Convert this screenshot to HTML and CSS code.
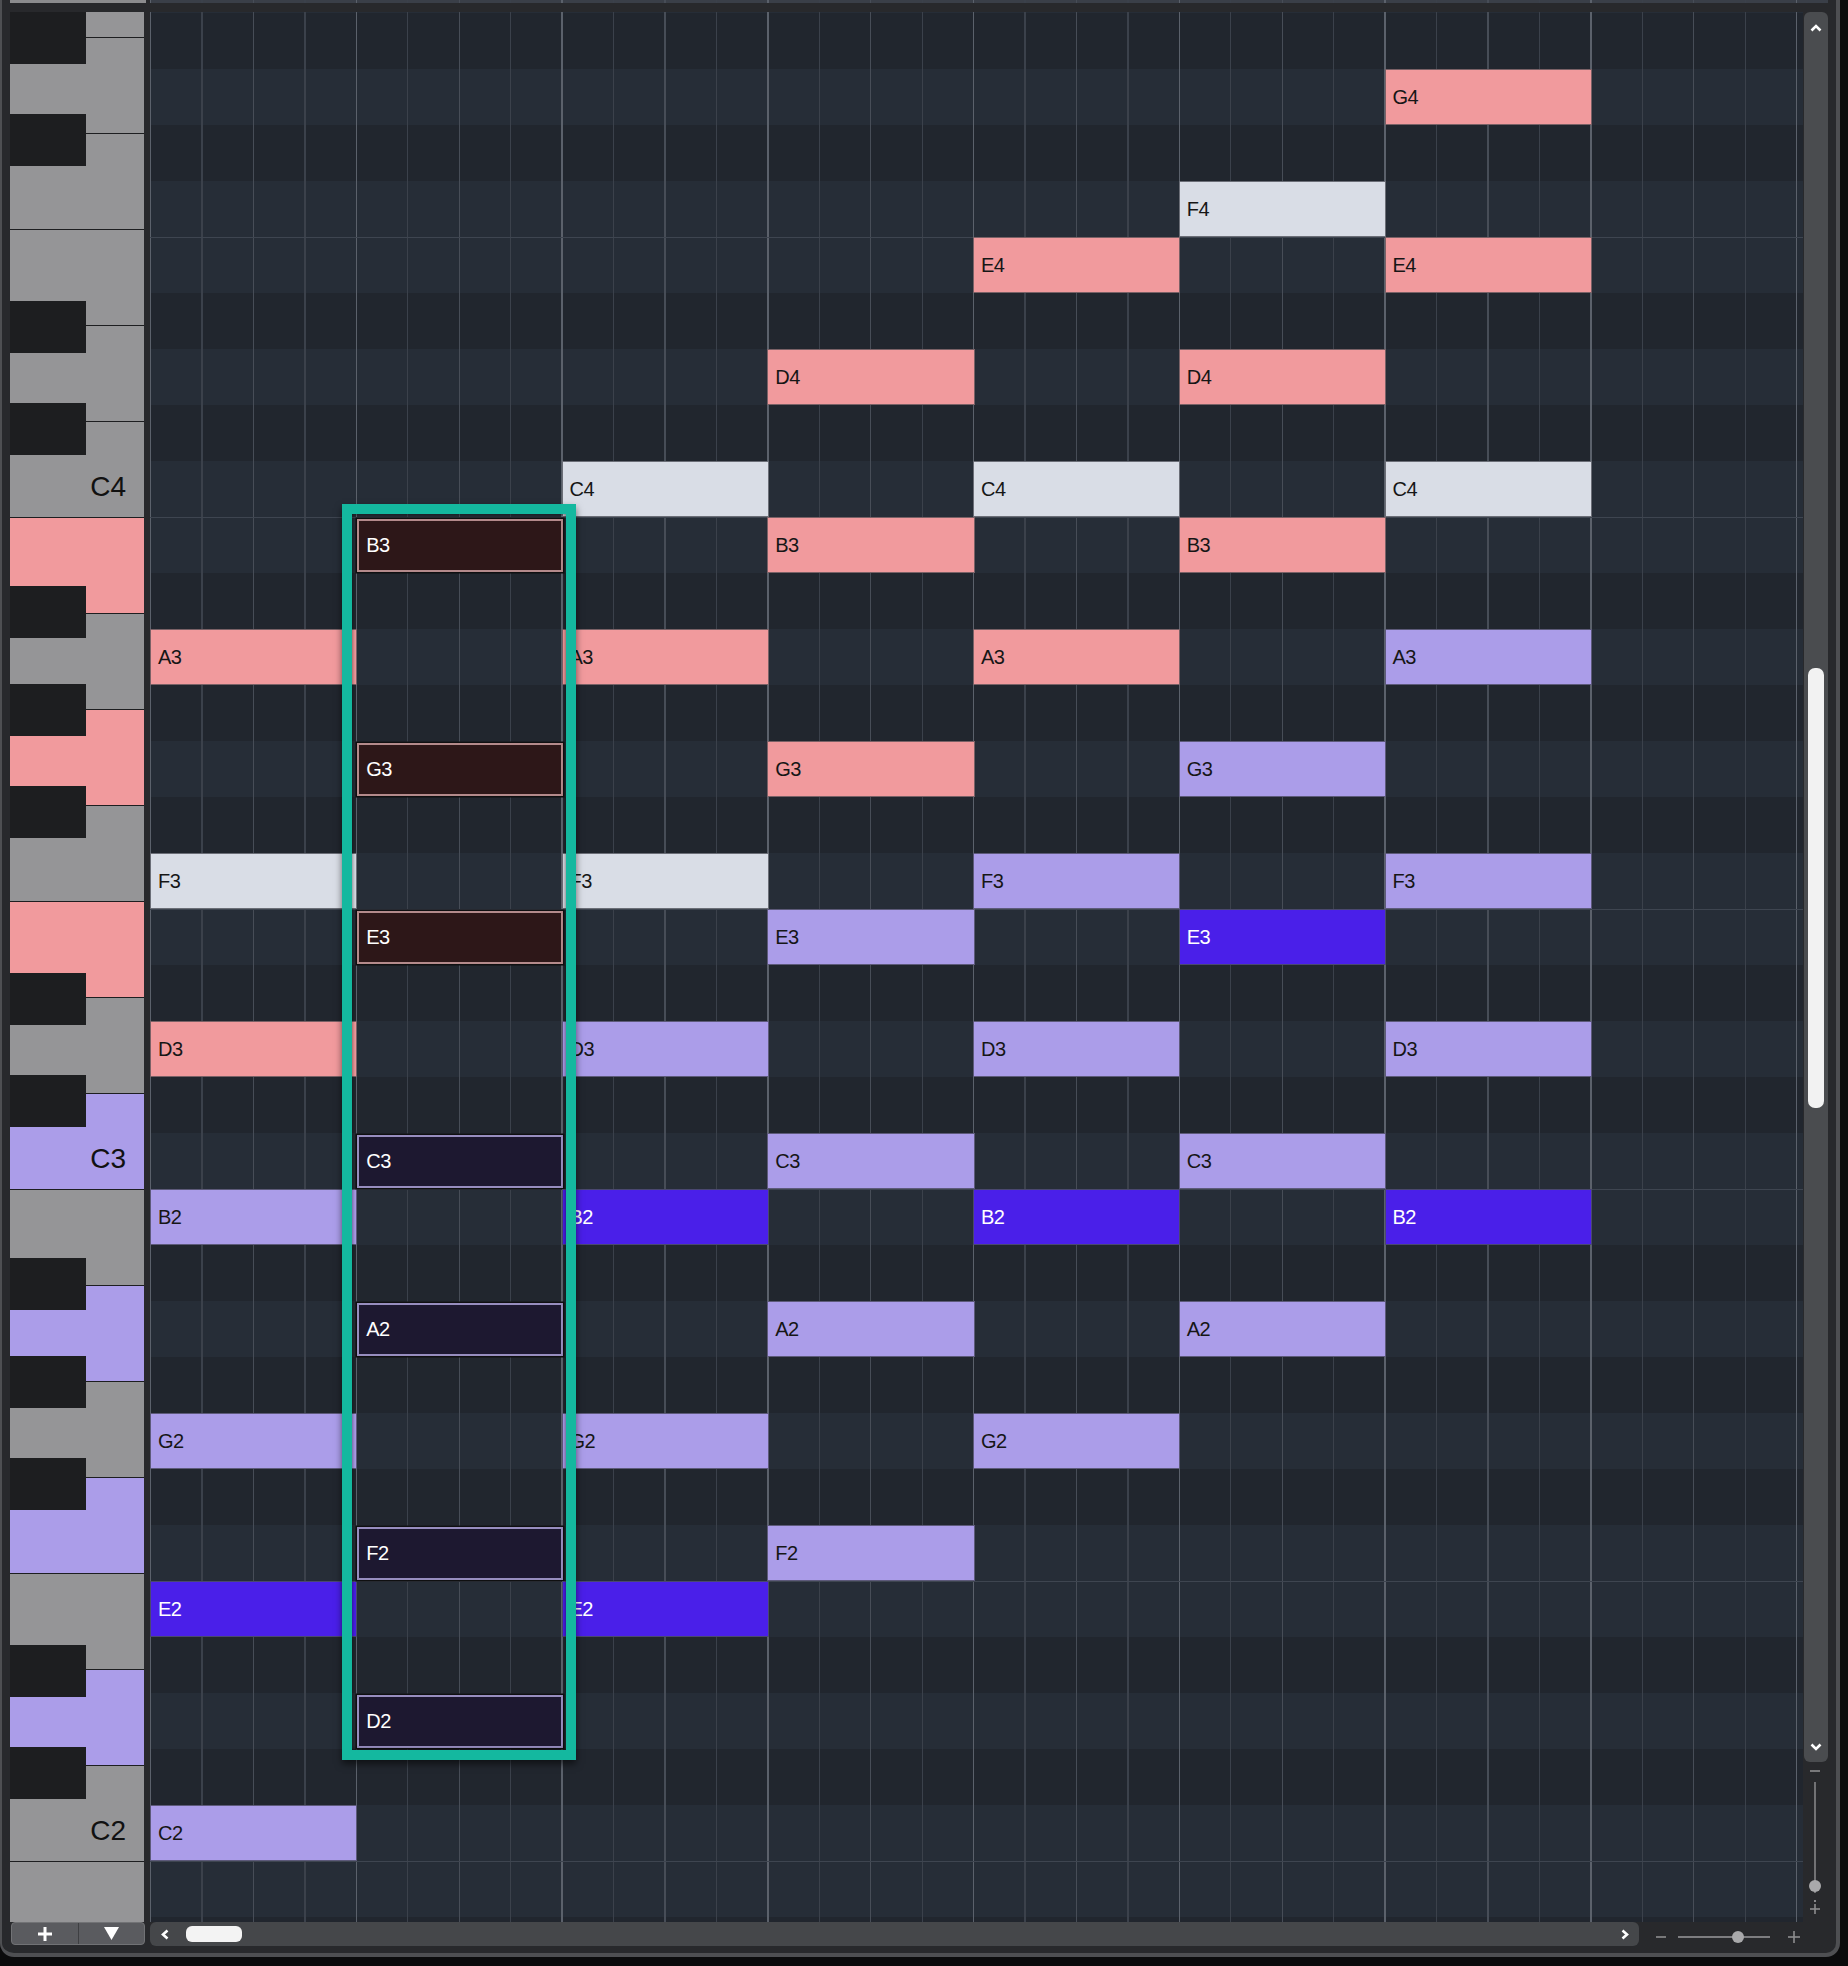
FILE: index.html
```html
<!DOCTYPE html>
<html lang="en">
<head>
    <meta charset="UTF-8">
    <meta name="viewport" content="width=device-width, initial-scale=1.0">
    <title>Key Editor</title>
    <link rel="stylesheet" href="styles.css">
</head>
<body>
    <div class="window">
        <!-- bottom edge of the ruler above -->
        <div class="top-strip">
            <div class="top-keys"></div>
            <div class="top-grid"></div>
        </div>

        <div class="main">
            <div class="keyboard">
                <div class="keys" id="keys"></div>
            </div>

            <div class="grid-wrap">
                <div class="grid" id="grid">
                    <div class="selection" id="selection"></div>
                </div>
            </div>

            <div class="vside">
                <div class="vscroll">
                    <svg class="chev-v" width="12" height="9" viewBox="0 0 12 9"><polyline points="1.5,7.5 6,3 10.5,7.5" /></svg>
                    <div class="vthumb"></div>
                    <svg class="chev-v chev-down" width="12" height="9" viewBox="0 0 12 9"><polyline points="1.5,1.5 6,6 10.5,1.5" /></svg>
                </div>
                <svg class="vzoom" width="24" height="160" viewBox="0 0 24 160">
                    <line x1="6" y1="9" x2="16" y2="9" class="zl" />
                    <line x1="11" y1="20" x2="11" y2="131" class="zt" />
                    <circle cx="11" cy="124" r="6" class="zk" />
                    <circle cx="11" cy="139" r="1" class="zk" />
                    <line x1="6" y1="147" x2="16" y2="147" class="zl" />
                    <line x1="11" y1="142" x2="11" y2="152" class="zl" />
                </svg>
            </div>
        </div>

        <div class="bottom">
            <div class="btn-group">
                <div class="btn">
                    <svg width="16" height="14" viewBox="0 0 16 14"><path d="M8 0V14M1 7H15" class="icon-stroke" /></svg>
                </div>
                <div class="btn">
                    <svg width="15" height="13" viewBox="0 0 15 13"><polygon points="0,0 15,0 7.5,13" fill="#fff" /></svg>
                </div>
            </div>
            <div class="hscroll">
                <svg class="chev-h" width="8" height="11" viewBox="0 0 8 11"><polyline points="6.5,1.5 2,5.5 6.5,9.5" /></svg>
                <div class="hthumb"></div>
                <svg class="chev-h chev-right" width="8" height="11" viewBox="0 0 8 11"><polyline points="1.5,1.5 6,5.5 1.5,9.5" /></svg>
            </div>
            <svg class="hzoom" width="156" height="24" viewBox="0 0 156 24">
                <line x1="6" y1="15" x2="16" y2="15" class="zl" />
                <line x1="28" y1="15" x2="120" y2="15" class="zt" />
                <circle cx="88" cy="15" r="6" class="zk" />
                <line x1="138" y1="15" x2="150" y2="15" class="zl" />
                <line x1="144" y1="9" x2="144" y2="21" class="zl" />
            </svg>
        </div>
    </div>

    <script>
        const names = ['B', 'A#', 'A', 'G#', 'G', 'F#', 'F', 'E', 'D#', 'D', 'C#', 'C'];

        // keys lit up on the keyboard
        const keyColors = {
            B3: 'pink', G3: 'pink', E3: 'pink',
            C3: 'lav', A2: 'lav', F2: 'lav', D2: 'lav'
        };

        // one list of [note, colour] per bar
        const bars = [
            [['A3', 'pink'], ['F3', 'light'], ['D3', 'pink'], ['B2', 'lav'], ['G2', 'lav'], ['E2', 'blue'], ['C2', 'lav']],
            [['B3', 'dred'], ['G3', 'dred'], ['E3', 'dred'], ['C3', 'dlav'], ['A2', 'dlav'], ['F2', 'dlav'], ['D2', 'dlav']],
            [['C4', 'light'], ['A3', 'pink'], ['F3', 'light'], ['D3', 'lav'], ['B2', 'blue'], ['G2', 'lav'], ['E2', 'blue']],
            [['D4', 'pink'], ['B3', 'pink'], ['G3', 'pink'], ['E3', 'lav'], ['C3', 'lav'], ['A2', 'lav'], ['F2', 'lav']],
            [['E4', 'pink'], ['C4', 'light'], ['A3', 'pink'], ['F3', 'lav'], ['D3', 'lav'], ['B2', 'blue'], ['G2', 'lav']],
            [['F4', 'light'], ['D4', 'pink'], ['B3', 'pink'], ['G3', 'lav'], ['E3', 'blue'], ['C3', 'lav'], ['A2', 'lav']],
            [['G4', 'pink'], ['E4', 'pink'], ['C4', 'light'], ['A3', 'lav'], ['F3', 'lav'], ['D3', 'lav'], ['B2', 'blue']]
        ];

        function rowOf(note) {
            const name = note.slice(0, -1);
            const octave = parseInt(note.slice(-1));
            return (4 - octave) * 12 + names.indexOf(name);
        }

        // Keyboard: octaves 4..2, then just the top of octave 1
        const keys = document.getElementById('keys');
        for (let oct = 4; oct >= 1; oct--) {
            const octave = document.createElement('div');
            octave.className = 'octave';
            const whites = oct > 1 ? ['B', 'A', 'G', 'F', 'E', 'D', 'C'] : ['B', 'A'];
            const blacks = oct > 1 ? ['as', 'gs', 'fs', 'ds', 'cs'] : ['as'];
            whites.forEach(function(n) {
                const key = document.createElement('div');
                key.className = 'white ' + (keyColors[n + oct] || '');
                if (n === 'C') key.textContent = 'C' + oct;
                octave.appendChild(key);
            });
            blacks.forEach(function(n) {
                const key = document.createElement('div');
                key.className = 'black bk-' + n;
                octave.appendChild(key);
            });
            keys.appendChild(octave);
        }

        // Grid rows
        const grid = document.getElementById('grid');
        const selection = document.getElementById('selection');
        for (let r = 0; r < 40; r++) {
            const name = names[r % 12];
            const row = document.createElement('div');
            row.className = 'row';
            if (name.includes('#')) row.className += ' sharp';
            if (name === 'B' || name === 'E') row.className += ' edge';
            row.style.gridRow = r + 1;
            grid.insertBefore(row, selection);
        }

        // Notes
        bars.forEach(function(notes, bar) {
            notes.forEach(function(item) {
                const note = document.createElement('div');
                note.className = 'note ' + item[1];
                note.textContent = item[0];
                note.style.gridRow = rowOf(item[0]) + 1;
                note.style.gridColumn = bar + 1;
                grid.insertBefore(note, selection);
            });
        });
    </script>
</body>
</html>
```

FILE: styles.css
```css
* {
    box-sizing: border-box;
}
body {
    margin: 0;
    width: 1848px;
    height: 1966px;
    overflow: hidden;
    background-color: #0b0b0c;
    font-family: "Liberation Sans", Arial, sans-serif;
    --lines: repeating-linear-gradient(90deg, #5b616b 0 1.3px, transparent 1.3px 205.75px),
             repeating-linear-gradient(90deg, #474d57 0 1.3px, transparent 1.3px 102.875px),
             repeating-linear-gradient(90deg, #3b414b 0 1.3px, transparent 1.3px 51.4375px);
}
.window {
    width: 1840px;
    height: 1957px;
    background-color: #28292c;
    border: 0 solid #4e4f52;
    border-width: 0 4px 4px 2px;
    border-radius: 0 0 14px 14px;
    display: flex;
    flex-direction: column;
}

/* top strip */
.top-strip {
    display: flex;
    height: 3px;
    margin-bottom: 9px;
}
.top-keys {
    width: 136px;
    margin-left: 8px;
    background-color: #8c8c8e;
}
.top-grid {
    width: 1678px;
    margin-left: 4px;
    background-color: #3a3f48;
    background-image: var(--lines);
}

.main {
    display: flex;
    height: 1910px;
}

/* keyboard */
.keyboard {
    width: 134px;
    margin-left: 8px;
    overflow: hidden;
    background-color: #959597;
}
.keys {
    margin-top: -167px;
}
.octave {
    position: relative;
    height: 672px;
}
.white {
    height: 96px;
    background-color: #959597;
    border-top: 1.5px solid #1d1e20;
    display: flex;
    align-items: flex-end;
    justify-content: flex-end;
    padding: 0 18px 16px 0;
    font-size: 28px;
    line-height: 28px;
    color: #111;
}
.white.pink {
    background-color: #f19a9d;
}
.white.lav {
    background-color: #ab9de9;
}
.black {
    position: absolute;
    left: 0;
    width: 76px;
    height: 52px;
    background-color: #1d1e20;
}
.bk-as { top: 69px; }
.bk-gs { top: 167px; }
.bk-fs { top: 269px; }
.bk-ds { top: 456px; }
.bk-cs { top: 558px; }

/* note grid */
.grid-wrap {
    width: 1653px;
    margin-left: 6px;
    overflow: hidden;
}
.grid {
    display: grid;
    grid-template-columns: repeat(8, 205.75px) 1fr;
    grid-template-rows: repeat(40, 56px);
    margin-top: -167px;
}
.row {
    grid-column: 1 / -1;
    background-color: #262d37;
    background-image: var(--lines);
}
.row.sharp {
    background-color: #21262e;
}
.row.edge {
    background-image: linear-gradient(#3e4550 0 1.3px, transparent 1.3px), var(--lines);
}
.note {
    margin-right: -1.5px;
    border: 1.5px solid #6b6e77;
    display: flex;
    align-items: center;
    padding-left: 7px;
    font-size: 20px;
    letter-spacing: -0.5px;
    color: #161616;
    z-index: 1;
}
.note.pink {
    background-color: #f19a9d;
    border-color: #7a6166;
}
.note.lav {
    background-color: #ab9de9;
    border-color: #5d5a7a;
}
.note.light {
    background-color: #d9dde6;
    border-color: #6b6e77;
}
.note.blue {
    background-color: #4a1fe9;
    border-color: #4a4870;
    color: #fff;
}
.note.dred,
.note.dlav {
    margin: 2px -1.5px 1.5px 1.5px;
    border-width: 2px;
    box-shadow: 0 0 0 1.5px #0f0f10;
    color: #fff;
}
.note.dred {
    background-color: #2d1718;
    border-color: #b48a8b;
}
.note.dlav {
    background-color: #1d1830;
    border-color: #978dbf;
}
.selection {
    grid-row: 13 / 35;
    grid-column: 2 / 3;
    margin: -13px -14px -11px -14px;
    border: 10px solid #14b89f;
    box-shadow: 0 4px 7px rgba(0, 0, 0, 0.55), inset 0 0 4px rgba(0, 0, 0, 0.6);
    z-index: 2;
}

/* vertical scroller + zoom */
.vside {
    width: 24px;
    margin-left: 1px;
    display: flex;
    flex-direction: column;
}
.vscroll {
    height: 1750px;
    background-color: #4a4c4f;
    border-radius: 6px;
    display: flex;
    flex-direction: column;
    align-items: center;
}
.chev-v,
.chev-h {
    fill: none;
    stroke: #fff;
    stroke-width: 2.6;
}
.chev-v {
    margin-top: 11px;
}
.chev-down {
    margin-top: auto;
    margin-bottom: 10px;
}
.vthumb {
    width: 16px;
    height: 440px;
    margin-top: 636px;
    background-color: #f2f2f2;
    border-radius: 7px;
}
.zl {
    stroke: #8d8d8f;
    stroke-width: 1.6;
}
.zt {
    stroke: #9a9a9c;
    stroke-width: 1.3;
}
.zk {
    fill: #a9a9ab;
}

/* bottom bar */
.bottom {
    display: flex;
    height: 24px;
}
.btn-group {
    width: 134px;
    height: 23px;
    margin-left: 9px;
    display: flex;
    background-color: #5a5b5f;
    border: 1px solid #717275;
    border-radius: 4px;
}
.btn {
    flex: 1;
    display: flex;
    align-items: center;
    justify-content: center;
}
.btn + .btn {
    border-left: 1px solid #3e3f42;
}
.icon-stroke {
    stroke: #fff;
    stroke-width: 3;
}
.hscroll {
    width: 1489px;
    margin-left: 5px;
    background-color: #45474a;
    border-radius: 6px;
    display: flex;
    align-items: center;
    padding: 0 10px 0 11px;
}
.hthumb {
    width: 56px;
    height: 16px;
    margin-left: 17px;
    background-color: #f3f3f3;
    border-radius: 6px;
}
.chev-right {
    margin-left: auto;
}
.hzoom {
    margin-left: 11px;
}
```
